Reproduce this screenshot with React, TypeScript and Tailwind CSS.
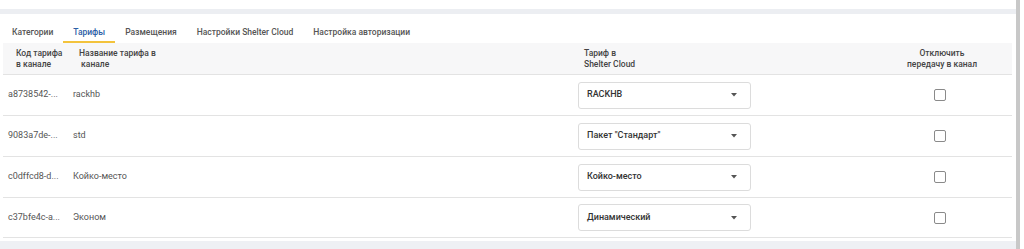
import React from "react";

const tabs = ["Категории", "Тарифы", "Размещения", "Настройки Shelter Cloud", "Настройка авторизации"];

const rows = [
  { code: "a8738542-...", name: "rackhb", tariff: "RACKHB", h: "h-[41px]" },
  { code: "9083a7de-...", name: "std", tariff: "Пакет \"Стандарт\"", h: "h-[41px]" },
  { code: "c0dffcd8-d...", name: "Койко-место", tariff: "Койко-место", h: "h-[41px]" },
  { code: "c37bfe4c-a...", name: "Эконом", tariff: "Динамический", h: "h-[40px]" },
];

function Caret() {
  return (
    <svg width="6" height="4" viewBox="0 0 6 4" className="block">
      <path d="M0 0 L6 0 L3 3.5 Z" fill="#555" />
    </svg>
  );
}

export default function App() {
  return (
    <div
      className="w-[1024px] h-[249px] bg-white flex overflow-hidden"
      style={{ fontFamily: "Roboto, 'Noto Sans', sans-serif" }}
    >
      <div className="w-[1016px] flex flex-col">
        <div className="h-[9px] bg-white" />
        <div className="h-[5px] bg-[#eceef2]" />
        {/* tabs */}
        <div className="h-[29px] flex items-stretch pl-[2px]">
          {tabs.map((t, i) => (
            <div
              key={t}
              className={
                "px-[10px] flex items-center text-[8.5px] font-medium border-b-2 pt-[9px] " +
                (i === 1 ? "text-[#2b5ea6] border-[#f3c33c]" : "text-[#555] border-transparent")
              }
            >
              {t}
            </div>
          ))}
        </div>
        {/* table */}
        <div className="ml-[3px] w-[1009px]">
          <div className="h-[32px] bg-[#f7f7f8] border-b border-[#e3e3e3] grid grid-cols-[65px_510px_302px_120px_1fr] items-center text-[8.5px] leading-[10.5px] font-medium text-[#444]">
            <div className="pl-[13px]">Код тарифа<br />в канале</div>
            <div className="pl-[11px]">Название тарифа в<br />&nbsp;канале</div>
            <div className="pl-[6px]">Тариф в<br />Shelter Cloud</div>
            <div className="text-center pl-[4px]">Отключить<br />передачу в канал</div>
            <div />
          </div>
          {rows.map((r) => (
            <div
              key={r.code}
              className={
                r.h +
                " border-b border-[#e3e3e3] grid grid-cols-[65px_510px_302px_120px_1fr] items-center text-[9px] text-[#555]"
              }
            >
              <div className="pl-[5px] whitespace-nowrap">{r.code}</div>
              <div className="pl-[5px]">{r.name}</div>
              <div>
                <div className="w-[173px] h-[27px] border border-[#dcdcdc] rounded-[3px] flex items-center justify-between pl-[8px] pr-[13px] text-[#333] font-medium">
                  <span>{r.tariff}</span>
                  <Caret />
                </div>
              </div>
              <div className="flex justify-center">
                <div className="w-[12px] h-[12px] border-[1.5px] border-[#8a8a8a] rounded-[2px]" />
              </div>
              <div />
            </div>
          ))}
        </div>
        <div className="h-[3px]" />
        <div className="flex-1 bg-[#eef0f4]" />
      </div>
      <div className="w-[4px] bg-[#c8c8c8]" />
      <div className="flex-1 bg-white" />
    </div>
  );
}
